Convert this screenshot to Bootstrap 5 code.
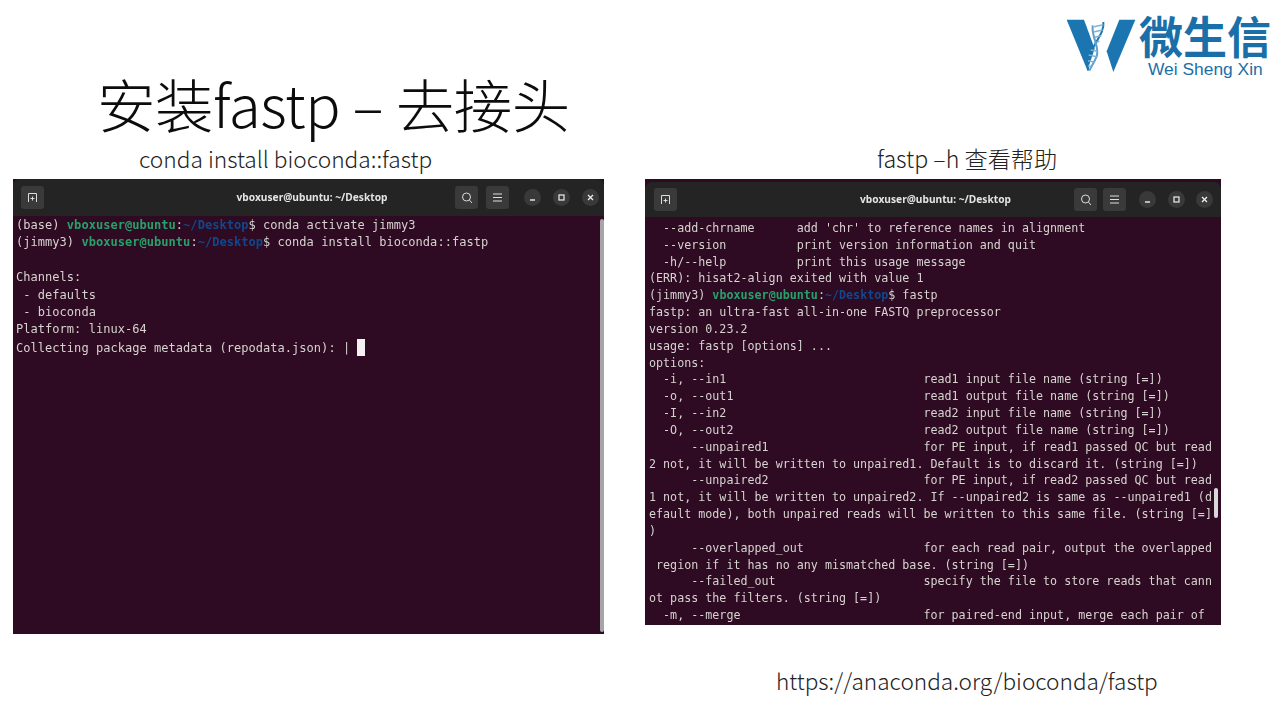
<!DOCTYPE html>
<html lang="zh-CN">
<head>
<meta charset="utf-8">
<title>安装fastp</title>
<link href="https://cdn.jsdelivr.net/npm/bootstrap@5.3.0/dist/css/bootstrap.min.css" rel="stylesheet">
<style>
html,body{margin:0;background:#fff;overflow:hidden}
.slide-page{width:1280px;height:720px;font-family:"Noto Sans CJK SC","Noto Sans",sans-serif;color:#111}
.top-band{height:146px;padding-left:97px}
.slide-title{font-size:58.5px;font-weight:300;line-height:70px;margin:68px 0 0;letter-spacing:-.45px;color:#0c0c0c}
.brand{width:203px;margin:13px 8px 0 0;color:#1b6fa8}
.brand-zh{font-family:"Noto Sans CJK SC",sans-serif;font-weight:700;font-size:44px;line-height:44px;white-space:nowrap}
.brand-en{font-family:"Liberation Sans",sans-serif;font-size:17.4px;line-height:20px;margin:2px 0 0 9px;white-space:nowrap}
.brand-mark{margin:5px 1px 0 -3px;flex:none}
.col-left{width:591px;margin-left:13px}
.col-right{width:576px;margin-left:41px}
.cap{line-height:26px;font-family:"Noto Sans CJK SC",sans-serif;font-weight:300;white-space:nowrap;color:#222;height:33px}
.cap-left{padding-left:126px;font-size:22.7px}
.cap-right{padding-left:232px;font-size:23.2px;line-height:24px}
.term{background:#2e0a23;position:relative;overflow:hidden;filter:blur(.35px)}
.term-left{height:455px}
.term-right{height:446px;padding-top:3px}
.term-bar{background:#242424;color:#e4e4e4;border-radius:7px 7px 0 0;display:grid;grid-template-columns:1fr auto 1fr;align-items:center}
.term-left .term-bar{height:37px;padding:0 5px 0 8px}
.term-right .term-bar{height:35px;padding:0 8px 0 9px}
.term-name{font-family:"Noto Sans","DejaVu Sans",sans-serif;font-weight:700;font-size:10.2px;padding-left:4px}
.tool{width:23px;height:23px;border-radius:3px;background:#3a3a3a;flex:none}
.round{width:17px;height:17px;border-radius:50%;background:#393939;flex:none}
.term-out{margin:0;font-family:"DejaVu Sans Mono",monospace;color:#d6d4cf;white-space:pre;overflow:hidden}
.term-left .term-out{font-size:12px;letter-spacing:.04px;line-height:17.4px;padding:1px 0 0 3px}
.term-right .term-out{font-size:11.7px;line-height:16.83px;padding:3px 0 0 4px}
.ln{display:block}
.pg{color:#26a269;font-weight:700}
.pb{color:#12488b;font-weight:700}
.cursor{display:inline-block;width:8px;height:17px;background:#f2f2f2;vertical-align:-4px}
.sbar{position:absolute;background:#a6a6a6;border-radius:2px}
.sbar-left{right:0;top:40px;width:4px;height:413px}
.sbar-right{right:3px;top:309px;width:4px;height:30px;background:#d8d8d8}
.url-row{padding:32px 0 0 776px;font-size:22.6px;line-height:30px;font-family:"Noto Sans CJK SC",sans-serif;font-weight:300;color:#222}
</style>
</head>
<body>
<div class="slide-page d-flex flex-column">
  <div class="top-band d-flex justify-content-between align-items-start">
    <h1 class="slide-title">安装fastp – 去接头</h1>
    <div class="brand d-flex">
      <svg class="brand-mark" width="72" height="55" viewBox="50 50 216 165">
        <polygon points="52,55 104,55 136,142 114,207" fill="#1b75b0"/>
        <polygon points="258,55 210,55 172,150 192,212" fill="#1b75b0"/>
        <path d="M162 62C168 105 112 135 116 208" fill="none" stroke="#1b75b0" stroke-width="6"/>
        <path d="M130 72C126 110 152 135 142 165C134 185 124 198 120 208" fill="none" stroke="#5f9fca" stroke-width="6"/>
        <path d="M134 76L162 70M132 92L160 86M136 108L156 103M142 122L150 120M144 150L124 146M142 166L118 161M134 182L116 178M126 196L116 193" stroke="#7fb3d5" stroke-width="4.5" fill="none"/>
      </svg>
      <div>
        <div class="brand-zh">微生信</div>
        <div class="brand-en">Wei Sheng Xin</div>
      </div>
    </div>
  </div>
  <div class="d-flex align-items-start">
    <div class="col-left">
      <div class="cap cap-left">conda install bioconda::fastp</div>
      <div class="term term-left">
        <div class="term-bar">
          <div class="tool d-flex align-items-center justify-content-center"><svg width="11" height="11" viewBox="0 0 11 11" fill="none" stroke="#ddd"><path d="M1.5 10V1.5H9.5V10M5.5 4.5V8.5M3.5 6.5H7.5"/></svg></div>
          <div class="term-name text-center">vboxuser@ubuntu: ~/Desktop</div>
          <div class="d-flex align-items-center justify-content-end">
            <div class="tool d-flex align-items-center justify-content-center me-2"><svg width="12" height="12" viewBox="0 0 12 12" fill="none" stroke="#ddd"><circle cx="5.5" cy="5" r="4"/><path d="M8.5 8.2L11 11"/></svg></div>
            <div class="tool d-flex align-items-center justify-content-center" style="margin-right:15px"><svg width="11" height="9" viewBox="0 0 11 9" stroke="#ddd"><path d="M1 1H10M1 4.5H10M1 8H10"/></svg></div>
            <div class="round d-flex align-items-center justify-content-center" style="margin-right:12px"><svg width="7" height="7" viewBox="0 0 7 7" stroke="#eee" stroke-width="1.4"><path d="M1 6H6"/></svg></div>
            <div class="round d-flex align-items-center justify-content-center" style="margin-right:12px"><svg width="7" height="7" viewBox="0 0 7 7" stroke="#eee" fill="none" stroke-width="1.2"><rect x="1" y="1" width="5" height="5"/></svg></div>
            <div class="round d-flex align-items-center justify-content-center"><svg width="7" height="7" viewBox="0 0 7 7" stroke="#eee" stroke-width="1.3"><path d="M1 1L6 6M6 1L1 6"/></svg></div>
          </div>
        </div>
        <pre class="term-out"><span class="ln">(base) <span class="pg">vboxuser@ubuntu</span>:<span class="pb">~/Desktop</span>$ conda activate jimmy3</span><span class="ln">(jimmy3) <span class="pg">vboxuser@ubuntu</span>:<span class="pb">~/Desktop</span>$ conda install bioconda::fastp</span><span class="ln"> </span>Channels:
 - defaults
 - bioconda
Platform: linux-64
<span class="ln">Collecting package metadata (repodata.json): | <span class="cursor"></span></span></pre>
        <div class="sbar sbar-left"></div>
      </div>
    </div>
    <div class="col-right">
      <div class="cap cap-right">fastp –h 查看帮助</div>
      <div class="term term-right">
        <div class="term-bar">
          <div class="tool d-flex align-items-center justify-content-center"><svg width="11" height="11" viewBox="0 0 11 11" fill="none" stroke="#ddd"><path d="M1.5 10V1.5H9.5V10M5.5 4.5V8.5M3.5 6.5H7.5"/></svg></div>
          <div class="term-name text-center">vboxuser@ubuntu: ~/Desktop</div>
          <div class="d-flex align-items-center justify-content-end">
            <div class="tool d-flex align-items-center justify-content-center" style="margin-right:6px"><svg width="12" height="12" viewBox="0 0 12 12" fill="none" stroke="#ddd"><circle cx="5.5" cy="5" r="4"/><path d="M8.5 8.2L11 11"/></svg></div>
            <div class="tool d-flex align-items-center justify-content-center" style="margin-right:13px"><svg width="11" height="9" viewBox="0 0 11 9" stroke="#ddd"><path d="M1 1H10M1 4.5H10M1 8H10"/></svg></div>
            <div class="round d-flex align-items-center justify-content-center" style="margin-right:12px"><svg width="7" height="7" viewBox="0 0 7 7" stroke="#eee" stroke-width="1.4"><path d="M1 6H6"/></svg></div>
            <div class="round d-flex align-items-center justify-content-center" style="margin-right:11px"><svg width="7" height="7" viewBox="0 0 7 7" stroke="#eee" fill="none" stroke-width="1.2"><rect x="1" y="1" width="5" height="5"/></svg></div>
            <div class="round d-flex align-items-center justify-content-center"><svg width="7" height="7" viewBox="0 0 7 7" stroke="#eee" stroke-width="1.3"><path d="M1 1L6 6M6 1L1 6"/></svg></div>
          </div>
        </div>
        <pre class="term-out">  --add-chrname      add 'chr' to reference names in alignment
  --version          print version information and quit
  -h/--help          print this usage message
(ERR): hisat2-align exited with value 1
<span class="ln">(jimmy3) <span class="pg">vboxuser@ubuntu</span>:<span class="pb">~/Desktop</span>$ fastp</span>fastp: an ultra-fast all-in-one FASTQ preprocessor
version 0.23.2
usage: fastp [options] ...
options:
  -i, --in1                            read1 input file name (string [=])
  -o, --out1                           read1 output file name (string [=])
  -I, --in2                            read2 input file name (string [=])
  -O, --out2                           read2 output file name (string [=])
      --unpaired1                      for PE input, if read1 passed QC but read
2 not, it will be written to unpaired1. Default is to discard it. (string [=])
      --unpaired2                      for PE input, if read2 passed QC but read
1 not, it will be written to unpaired2. If --unpaired2 is same as --unpaired1 (d
efault mode), both unpaired reads will be written to this same file. (string [=]
)
      --overlapped_out                 for each read pair, output the overlapped
 region if it has no any mismatched base. (string [=])
      --failed_out                     specify the file to store reads that cann
ot pass the filters. (string [=])
  -m, --merge                          for paired-end input, merge each pair of</pre>
        <div class="sbar sbar-right"></div>
      </div>
    </div>
  </div>
  <div class="url-row">https://anaconda.org/bioconda/fastp</div>
</div>
<script src="https://cdn.jsdelivr.net/npm/bootstrap@5.3.0/dist/js/bootstrap.bundle.min.js"></script>
</body>
</html>
